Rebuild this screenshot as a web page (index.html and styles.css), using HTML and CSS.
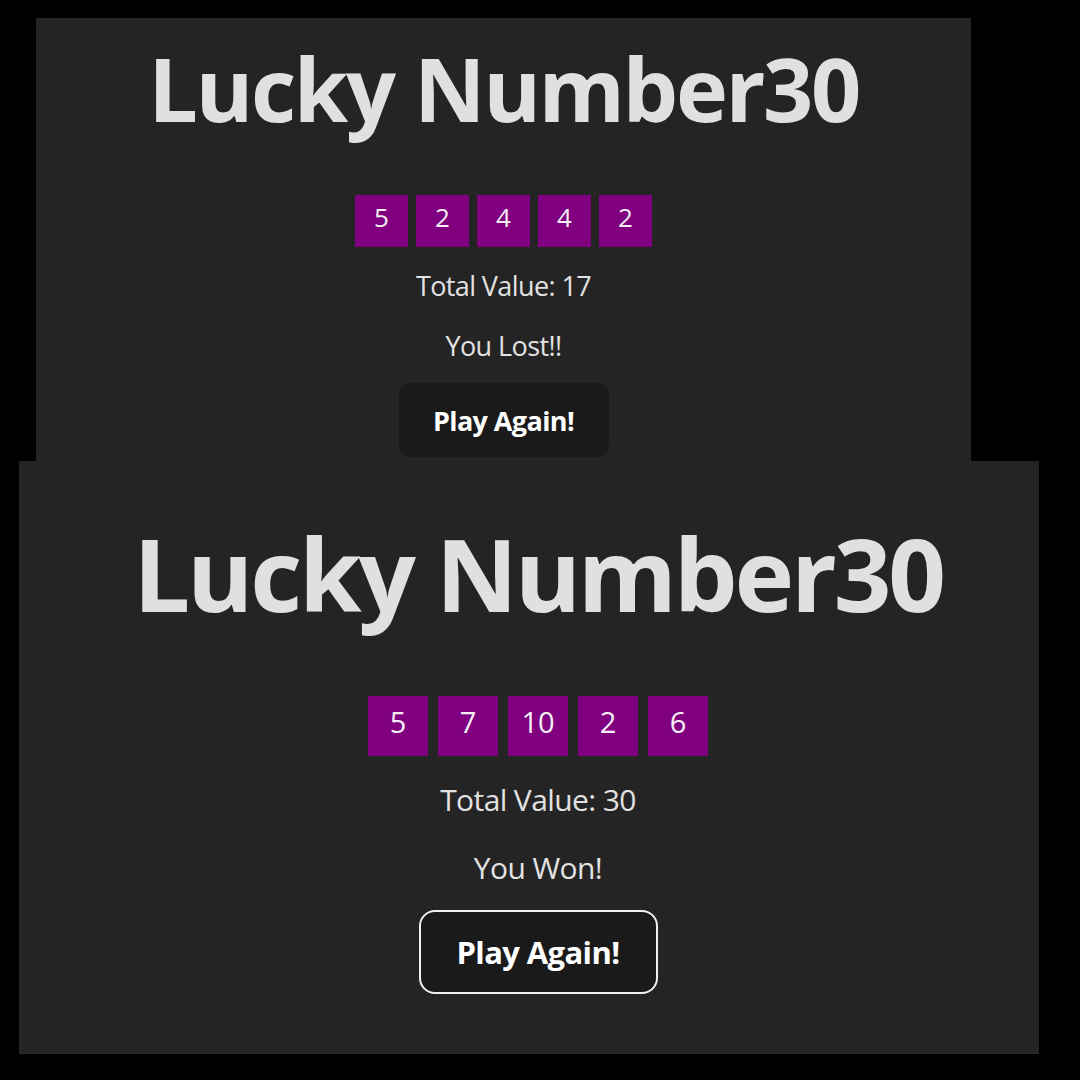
FILE: index.html
```html
<!DOCTYPE html>
<html lang="en">
<head>
<meta charset="utf-8">
<title>Lucky Number30</title>
<link rel="stylesheet" href="styles.css">
</head>
<body>
  <div class="stage">
    <section class="panel panel-small">
      <h1 class="title">Lucky Number30</h1>
      <div class="dice">
        <div class="die">5</div>
        <div class="die">2</div>
        <div class="die">4</div>
        <div class="die">4</div>
        <div class="die">2</div>
      </div>
      <p class="line total">Total Value: 17</p>
      <p class="line result">You Lost!!</p>
      <button class="play">Play Again!</button>
    </section>
    <section class="panel panel-large">
      <h1 class="title">Lucky Number30</h1>
      <div class="dice">
        <div class="die">5</div>
        <div class="die">7</div>
        <div class="die">10</div>
        <div class="die">2</div>
        <div class="die">6</div>
      </div>
      <p class="line total">Total Value: 30</p>
      <p class="line result">You Won!</p>
      <button class="play focused">Play Again!</button>
    </section>
  </div>
</body>
</html>
```

FILE: styles.css
```css
html, body {
  margin: 0;
  padding: 0;
  background: #000000;
}

body {
  width: 1080px;
  height: 1080px;
  overflow: hidden;
  font-family: "Open Sans", "Noto Sans", "Liberation Sans", sans-serif;
}

.stage {
  display: flex;
  flex-direction: column;
  align-items: flex-start;
  padding-top: 18px;
}

.panel {
  background: #242424;
  color: rgba(255, 255, 255, 0.87);
  display: flex;
  flex-direction: column;
  align-items: center;
  overflow: hidden;
  box-sizing: border-box;
}

.title {
  margin: 0;
  font-weight: 700;
  color: #e0e0e0;
  white-space: nowrap;
}

.dice {
  display: flex;
}

.die {
  background: #800080;
  color: #f4eef4;
  display: flex;
  align-items: center;
  justify-content: center;
  box-sizing: border-box;
}

.line {
  margin: 0;
  color: #e2e2e2;
}

.play {
  font-family: inherit;
  font-weight: 700;
  color: #ffffff;
  background: #1a1a1a;
  border: 2px solid transparent;
  box-sizing: border-box;
  padding: 0;
  cursor: pointer;
}

/* ---- first (smaller) screenshot ---- */
.panel-small {
  margin-left: 36px;
  width: 935px;
  height: 443px;
  padding-top: 20px;
}

.panel-small .title {
  font-size: 88px;
  line-height: 100px;
  letter-spacing: -2.4px;
}

.panel-small .dice {
  margin-top: 57px;
  gap: 8px;
}

.panel-small .die {
  width: 53px;
  height: 52px;
  font-size: 26px;
  padding-bottom: 8px;
}

.panel-small .line {
  font-size: 27px;
  line-height: 36px;
  letter-spacing: -0.6px;
}

.panel-small .total {
  margin-top: 21px;
}

.panel-small .result {
  margin-top: 24px;
}

.panel-small .play {
  margin-top: 19px;
  width: 210px;
  height: 74px;
  border-radius: 14px;
  font-size: 27px;
  letter-spacing: -0.6px;
}

/* ---- second (larger) screenshot ---- */
.panel-large {
  margin-left: 19px;
  width: 1020px;
  height: 593px;
  padding-top: 54px;
  padding-left: 18px;
  border-bottom: 1px solid #2c2c2c;
}

.panel-large .title {
  font-size: 101px;
  line-height: 117px;
  letter-spacing: -3.2px;
}

.panel-large .dice {
  margin-top: 64px;
  gap: 10px;
}

.panel-large .die {
  width: 60px;
  height: 60px;
  font-size: 29px;
  padding-bottom: 9px;
}

.panel-large .line {
  font-size: 30px;
  line-height: 40px;
  letter-spacing: -0.6px;
}

.panel-large .total {
  margin-top: 24px;
}

.panel-large .result {
  margin-top: 28px;
}

.panel-large .play {
  margin-top: 22px;
  width: 239px;
  height: 84px;
  border-radius: 16px;
  font-size: 31px;
  letter-spacing: -0.6px;
}

.panel-large .play.focused {
  border-color: #f0f0f0;
}
```
